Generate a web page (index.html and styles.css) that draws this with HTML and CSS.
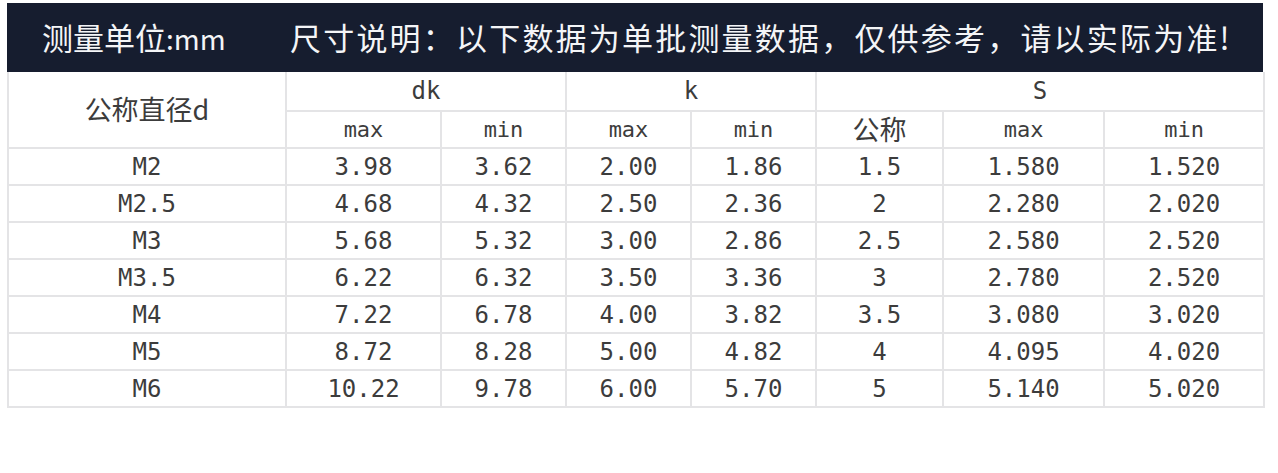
FILE: index.html
```html
<!DOCTYPE html>
<html lang="zh">
<head>
<meta charset="utf-8">
<link rel="stylesheet" href="styles.css">
</head>
<body>
<div class="sheet">
  <div class="banner">
    <span class="unit">测量单位<span class="latin">:mm</span></span>
    <span class="note">尺寸说明：以下数据为单批测量数据，仅供参考，请以实际为准!</span>
  </div>
  <table class="spec">
    <colgroup>
      <col class="c1"><col class="c2"><col class="c3"><col class="c4"><col class="c5"><col class="c6"><col class="c7"><col class="c8">
    </colgroup>
    <thead>
      <tr class="h1">
        <th rowspan="2" class="zh">公称直径d</th>
        <th colspan="2">dk</th>
        <th colspan="2">k</th>
        <th colspan="3">S</th>
      </tr>
      <tr class="h2">
        <th>max</th><th>min</th><th>max</th><th>min</th><th class="zh">公称</th><th>max</th><th>min</th>
      </tr>
    </thead>
    <tbody>
      <tr><td>M2</td><td>3.98</td><td>3.62</td><td>2.00</td><td>1.86</td><td>1.5</td><td>1.580</td><td>1.520</td></tr>
      <tr><td>M2.5</td><td>4.68</td><td>4.32</td><td>2.50</td><td>2.36</td><td>2</td><td>2.280</td><td>2.020</td></tr>
      <tr><td>M3</td><td>5.68</td><td>5.32</td><td>3.00</td><td>2.86</td><td>2.5</td><td>2.580</td><td>2.520</td></tr>
      <tr><td>M3.5</td><td>6.22</td><td>6.32</td><td>3.50</td><td>3.36</td><td>3</td><td>2.780</td><td>2.520</td></tr>
      <tr><td>M4</td><td>7.22</td><td>6.78</td><td>4.00</td><td>3.82</td><td>3.5</td><td>3.080</td><td>3.020</td></tr>
      <tr><td>M5</td><td>8.72</td><td>8.28</td><td>5.00</td><td>4.82</td><td>4</td><td>4.095</td><td>4.020</td></tr>
      <tr><td>M6</td><td>10.22</td><td>9.78</td><td>6.00</td><td>5.70</td><td>5</td><td>5.140</td><td>5.020</td></tr>
    </tbody>
  </table>
</div>
</body>
</html>
```

FILE: styles.css
```css
html, body {
  margin: 0;
  padding: 0;
  background: #ffffff;
}

.sheet {
  width: 1256px;
  margin: 3px 0 0 7px;
}

.banner {
  height: 69px;
  background: #161d2f;
  color: #f4f5f7;
  display: flex;
  align-items: center;
  font-family: "Noto Sans CJK SC", "Noto Sans", sans-serif;
  font-size: 31px;
  box-sizing: border-box;
  padding: 0 0 2px 35px;
}

.unit {
  width: 248px;
  flex: none;
}

.unit .latin {
  font-size: 28px;
}

.note {
  letter-spacing: 2.2px;
}

.spec {
  width: 1256px;
  table-layout: fixed;
  border-collapse: collapse;
  font-family: "DejaVu Sans Mono", "Noto Sans CJK SC", monospace;
  color: #3c3c3c;
  font-size: 24px;
}

.c1 { width: 278px; }
.c2 { width: 155px; }
.c3 { width: 125px; }
.c4 { width: 125px; }
.c5 { width: 125px; }
.c6 { width: 127px; }
.c7 { width: 161px; }
.c8 { width: 160px; }

.spec th,
.spec td {
  border: 2px solid #e4e4e6;
  text-align: center;
  padding: 0;
  font-weight: normal;
  line-height: 1;
}

.spec thead tr:first-child th {
  border-top: none;
}

.h1 { height: 39px; }
.h2 { height: 37px; }
.h2 th { font-size: 22px; }
.spec tbody tr { height: 37px; }

.spec .zh {
  font-family: "Noto Sans CJK SC", sans-serif;
  font-size: 27px;
  padding-bottom: 3px;
}
```
